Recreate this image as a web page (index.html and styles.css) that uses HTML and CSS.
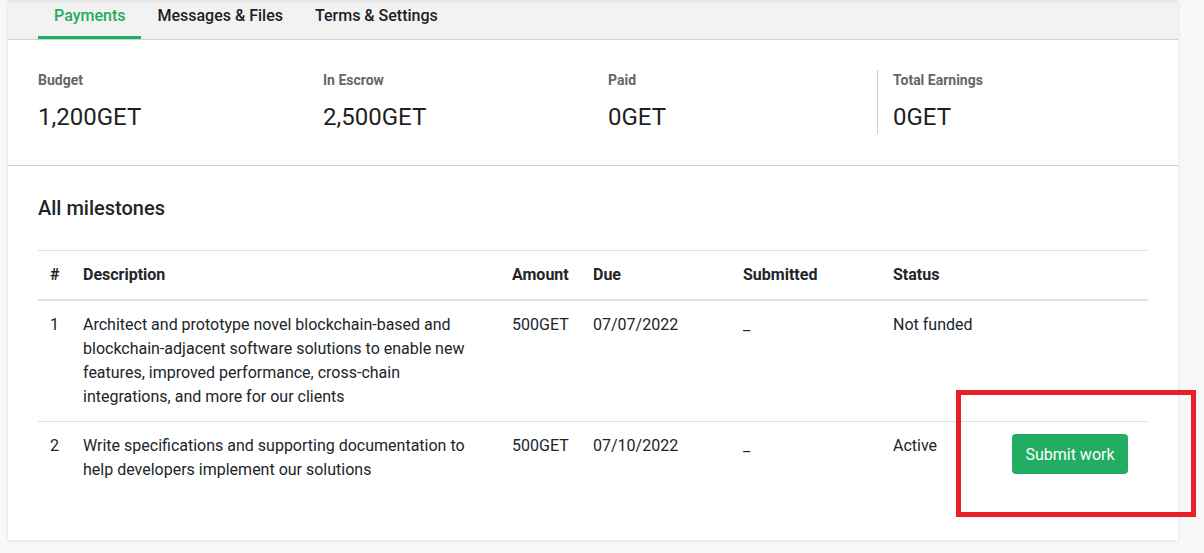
FILE: index.html
```html
<!DOCTYPE html>
<html lang="en">

    <head>
        <meta charset="UTF-8">
        <meta name="viewport" content="width=device-width, initial-scale=1.0">
        <title>Contract Payments</title>
        <link rel="stylesheet" href="styles.css">
    </head>

    <body>
        <div class="page">
            <div class="card">
                <nav class="tabs">
                    <a class="tab tab-active">Payments</a>
                    <a class="tab">Messages &amp; Files</a>
                    <a class="tab">Terms &amp; Settings</a>
                </nav>

                <div class="stats">
                    <div class="stat">
                        <div class="stat-label">Budget</div>
                        <div class="stat-value">1,200GET</div>
                    </div>
                    <div class="stat">
                        <div class="stat-label">In Escrow</div>
                        <div class="stat-value">2,500GET</div>
                    </div>
                    <div class="stat">
                        <div class="stat-label">Paid</div>
                        <div class="stat-value">0GET</div>
                    </div>
                    <div class="stat stat-divided">
                        <div class="stat-label">Total Earnings</div>
                        <div class="stat-value">0GET</div>
                    </div>
                </div>

                <div class="milestones">
                    <h2 class="milestones-title">All milestones</h2>
                    <table class="table">
                        <colgroup>
                            <col class="col-num">
                            <col class="col-desc">
                            <col class="col-amount">
                            <col class="col-due">
                            <col class="col-submitted">
                            <col class="col-status">
                            <col class="col-action">
                        </colgroup>
                        <thead>
                            <tr>
                                <th>#</th>
                                <th>Description</th>
                                <th>Amount</th>
                                <th>Due</th>
                                <th>Submitted</th>
                                <th>Status</th>
                                <th></th>
                            </tr>
                        </thead>
                        <tbody>
                            <tr>
                                <td>1</td>
                                <td>Architect and prototype novel blockchain-based and blockchain-adjacent software solutions to enable new features, improved performance, cross-chain integrations, and more for our clients</td>
                                <td>500GET</td>
                                <td>07/07/2022</td>
                                <td>_</td>
                                <td>Not funded</td>
                                <td></td>
                            </tr>
                            <tr>
                                <td>2</td>
                                <td>Write specifications and supporting documentation to help developers implement our solutions</td>
                                <td>500GET</td>
                                <td>07/10/2022</td>
                                <td>_</td>
                                <td>Active</td>
                                <td class="cell-action"><button class="btn-submit" type="button">Submit work</button></td>
                            </tr>
                        </tbody>
                    </table>
                </div>
            </div>

            <!-- annotation frame around the action -->
            <div class="highlight"></div>
        </div>
    </body>

</html>
```

FILE: styles.css
```css
html,
body {
    margin: 0;
    background-color: #f8f8f8;
    font-family: Roboto, "Liberation Sans", sans-serif;
    color: #212529;
}

.page {
    position: relative;
    padding: 0 8px;
    height: 553px;
    overflow: hidden;
}

.card {
    width: 1170px;
    background-color: #ffffff;
    box-shadow: 0 1px 3px rgba(0, 0, 0, 0.12);
}

/* tabs */

.tabs {
    display: flex;
    padding-left: 30px;
    background-color: #f2f2f2;
    border-bottom: 1px solid #d0d0d0;
    box-shadow: inset 0 4px 4px -3px rgba(0, 0, 0, 0.08);
}

.tab {
    padding: 4px 16px 8px;
    font-size: 16px;
    line-height: 24px;
    font-weight: 500;
    color: #1d1d26;
    border-bottom: 3px solid transparent;
}

.tab-active {
    color: #21ad5f;
    border-bottom-color: #21ad5f;
}

/* stats */

.stats {
    display: grid;
    grid-template-columns: repeat(4, 285px);
    padding: 30px 15px 31px;
    border-bottom: 1px solid #d0d0d0;
}

.stat {
    padding-left: 15px;
}

.stat-divided {
    border-left: 1px solid #d0d0d0;
    margin-left: -1px;
}

.stat-label {
    font-size: 14px;
    line-height: 20px;
    font-weight: 700;
    color: #666666;
    margin-bottom: 10px;
}

.stat-value {
    font-size: 24px;
    line-height: 34px;
    color: #1f1f1f;
}

/* milestones */

.milestones {
    padding: 30px 30px 46px;
}

.milestones-title {
    margin: 0 0 30px;
    font-size: 20px;
    line-height: 24px;
    font-weight: 500;
    color: #212529;
}

.table {
    width: 1110px;
    border-collapse: collapse;
    table-layout: fixed;
    font-size: 16px;
    line-height: 24px;
}

.col-num {
    width: 33px;
}

.col-desc {
    width: 429px;
}

.col-amount {
    width: 81px;
}

.col-due {
    width: 150px;
}

.col-submitted {
    width: 150px;
}

.col-status {
    width: 111px;
}

.col-action {
    width: 156px;
}

.table th,
.table td {
    padding: 12px;
    text-align: left;
    vertical-align: top;
    border-top: 1px solid #dee2e6;
}

.table th {
    font-weight: 700;
    border-bottom: 2px solid #dee2e6;
}

.table tbody tr:first-child td {
    border-top: 0;
}

.table td.cell-action {
    text-align: center;
}

.btn-submit {
    width: 116px;
    height: 40px;
    border: 0;
    border-radius: 4px;
    background-color: #21ad62;
    color: #ffffff;
    font-family: Roboto, "Liberation Sans", sans-serif;
    font-size: 16px;
    font-weight: 400;
}

/* red annotation frame */

.highlight {
    position: absolute;
    left: 956px;
    top: 390px;
    width: 230px;
    height: 117px;
    border: 5px solid #e81e28;
}
```
